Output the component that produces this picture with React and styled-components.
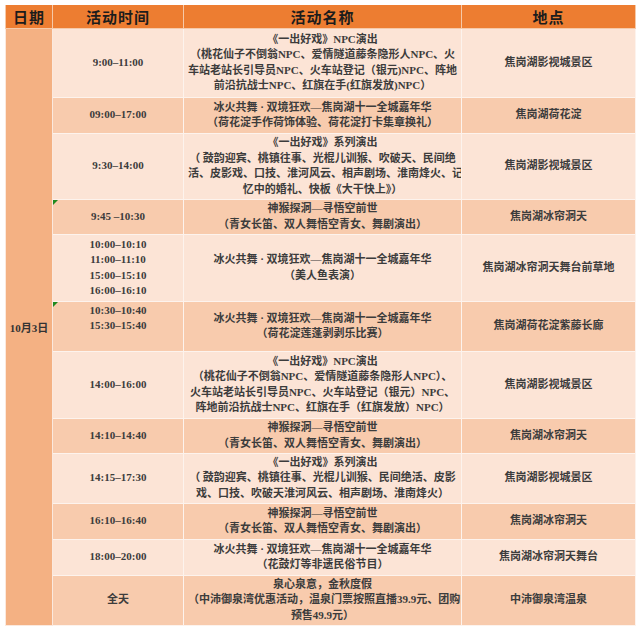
import React from "react";
import styled, { createGlobalStyle } from "styled-components";

const Global = createGlobalStyle`
  html, body { margin: 0; padding: 0; background: #ffffff; }
  body { font-family: "Liberation Serif", "Noto Sans CJK SC", serif; }
`;

const Page = styled.div`
  padding: 5px;
  width: 630px;
`;

const Table = styled.table`
  width: 630px;
  border-collapse: collapse;
  table-layout: fixed;
  font-family: "Liberation Serif", "Noto Sans CJK SC", serif;
  font-weight: 700;
`;

const HeadCell = styled.th`
  background: #ed7d31;
  color: #1c1c1c;
  font-size: 15px;
  height: 22px;
  padding: 0;
  letter-spacing: 1px;
  border: 1px solid #f6c9a8;
  border-top: none;
  text-align: center;
  vertical-align: middle;
`;

const DateCell = styled.td`
  background: #f4b183;
  color: #333;
  font-size: 11px;
  text-align: center;
  vertical-align: middle;
  border: 1px solid #fbe9de;
  padding: 0;
`;

const Cell = styled.td`
  position: relative;
  background: ${(p) => (p.$dark ? "#f8cbad" : "#fce4d6")};
  color: #3c3c3c;
  font-size: 11px;
  line-height: 15.5px;
  text-align: center;
  vertical-align: middle;
  border: 1px solid #fdf3ed;
  padding: 0 4px;
  white-space: nowrap;
  overflow: hidden;
`;

const Row = styled.tr`
  height: ${(p) => p.$h}px;
`;

const Marker = styled.span`
  position: absolute;
  left: 0;
  top: 0;
  width: 0;
  height: 0;
  border-top: 5px solid #1f8a1f;
  border-right: 5px solid transparent;
`;

const CARNIVAL = "冰火共舞 · 双境狂欢—焦岗湖十一全城嘉年华";

const rows = [
  {
    h: 69,
    time: ["9:00–11:00"],
    name: [
      "《一出好戏》NPC演出",
      "（桃花仙子不倒翁NPC、爱情隧道藤条隐形人NPC、火",
      "车站老站长引导员NPC、火车站登记（银元)NPC、阵地",
      "前沿抗战士NPC、红旗在手(红旗发放)NPC）",
    ],
    place: "焦岗湖影视城景区",
  },
  {
    h: 36,
    time: ["09:00–17:00"],
    name: [CARNIVAL, "（荷花淀手作荷饰体验、荷花淀打卡集章换礼）"],
    place: "焦岗湖荷花淀",
  },
  {
    h: 66,
    time: ["9:30–14:00"],
    name: [
      "《一出好戏》系列演出",
      "（ 鼓韵迎宾、桃镇往事、光棍儿训猴、吹破天、民间绝",
      "活、皮影戏、口技、淮河风云、相声剧场、淮南烽火、记",
      "忆中的婚礼、快板《大干快上》）",
    ],
    place: "焦岗湖影视城景区",
  },
  {
    h: 35,
    mark: true,
    time: ["9:45 –10:30"],
    name: ["神猴探洞—寻悟空前世", "（青女长笛、双人舞悟空青女、舞剧演出）"],
    place: "焦岗湖冰帘洞天",
  },
  {
    h: 67,
    time: ["10:00–10:10", "11:00–11:10", "15:00–15:10", "16:00–16:10"],
    name: [CARNIVAL, "（美人鱼表演）"],
    place: "焦岗湖冰帘洞天舞台前草地",
  },
  {
    h: 50,
    mark: true,
    time: ["10:30–10:40", "15:30–15:40", "\u00a0"],
    name: [CARNIVAL, "（荷花淀莲蓬剥剥乐比赛）"],
    place: "焦岗湖荷花淀紫藤长廊",
  },
  {
    h: 67,
    time: ["14:00–16:00"],
    name: [
      "《一出好戏》NPC演出",
      "（桃花仙子不倒翁NPC、爱情隧道藤条隐形人NPC）、",
      "火车站老站长引导员NPC、火车站登记（银元）NPC、",
      "阵地前沿抗战士NPC、红旗在手（红旗发放）NPC）",
    ],
    place: "焦岗湖影视城景区",
  },
  {
    h: 35,
    time: ["14:10–14:40"],
    name: ["神猴探洞—寻悟空前世", "（青女长笛、双人舞悟空青女、舞剧演出）"],
    place: "焦岗湖冰帘洞天",
  },
  {
    h: 50,
    time: ["14:15–17:30"],
    name: [
      "《一出好戏》系列演出",
      "（ 鼓韵迎宾、桃镇往事、光棍儿训猴、民间绝活、皮影",
      "戏、口技、吹破天淮河风云、相声剧场、淮南烽火）",
    ],
    place: "焦岗湖影视城景区",
  },
  {
    h: 36,
    time: ["16:10–16:40"],
    name: ["神猴探洞—寻悟空前世", "（青女长笛、双人舞悟空青女、舞剧演出）"],
    place: "焦岗湖冰帘洞天",
  },
  {
    h: 36,
    time: ["18:00–20:00"],
    name: [CARNIVAL, "（花鼓灯等非遗民俗节目）"],
    place: "焦岗湖冰帘洞天舞台",
  },
  {
    h: 50,
    time: ["全天"],
    name: [
      "泉心泉意，金秋度假",
      "（中沛御泉湾优惠活动，温泉门票按照直播39.9元、团购",
      "预售49.9元）",
    ],
    place: "中沛御泉湾温泉",
  },
];

const Lines = ({ lines }) =>
  lines.map((l, i) => (
    <React.Fragment key={i}>
      {i > 0 && <br />}
      {l}
    </React.Fragment>
  ));

export default function App() {
  return (
    <Page>
      <Global />
      <Table>
        <colgroup>
          <col style={{ width: 47 }} />
          <col style={{ width: 131 }} />
          <col style={{ width: 278 }} />
          <col style={{ width: 174 }} />
        </colgroup>
        <thead>
          <Row $h={23}>
            <HeadCell>日期</HeadCell>
            <HeadCell>活动时间</HeadCell>
            <HeadCell>活动名称</HeadCell>
            <HeadCell>地点</HeadCell>
          </Row>
        </thead>
        <tbody>
          {rows.map((r, i) => (
            <Row key={i} $h={r.h}>
              {i === 0 && <DateCell rowSpan={rows.length}>10月3日</DateCell>}
              <Cell $dark={i % 2 === 1}>
                {r.mark && <Marker />}
                <Lines lines={r.time} />
              </Cell>
              <Cell $dark={i % 2 === 1}>
                <Lines lines={r.name} />
              </Cell>
              <Cell $dark={i % 2 === 1}>{r.place}</Cell>
            </Row>
          ))}
        </tbody>
      </Table>
    </Page>
  );
}
